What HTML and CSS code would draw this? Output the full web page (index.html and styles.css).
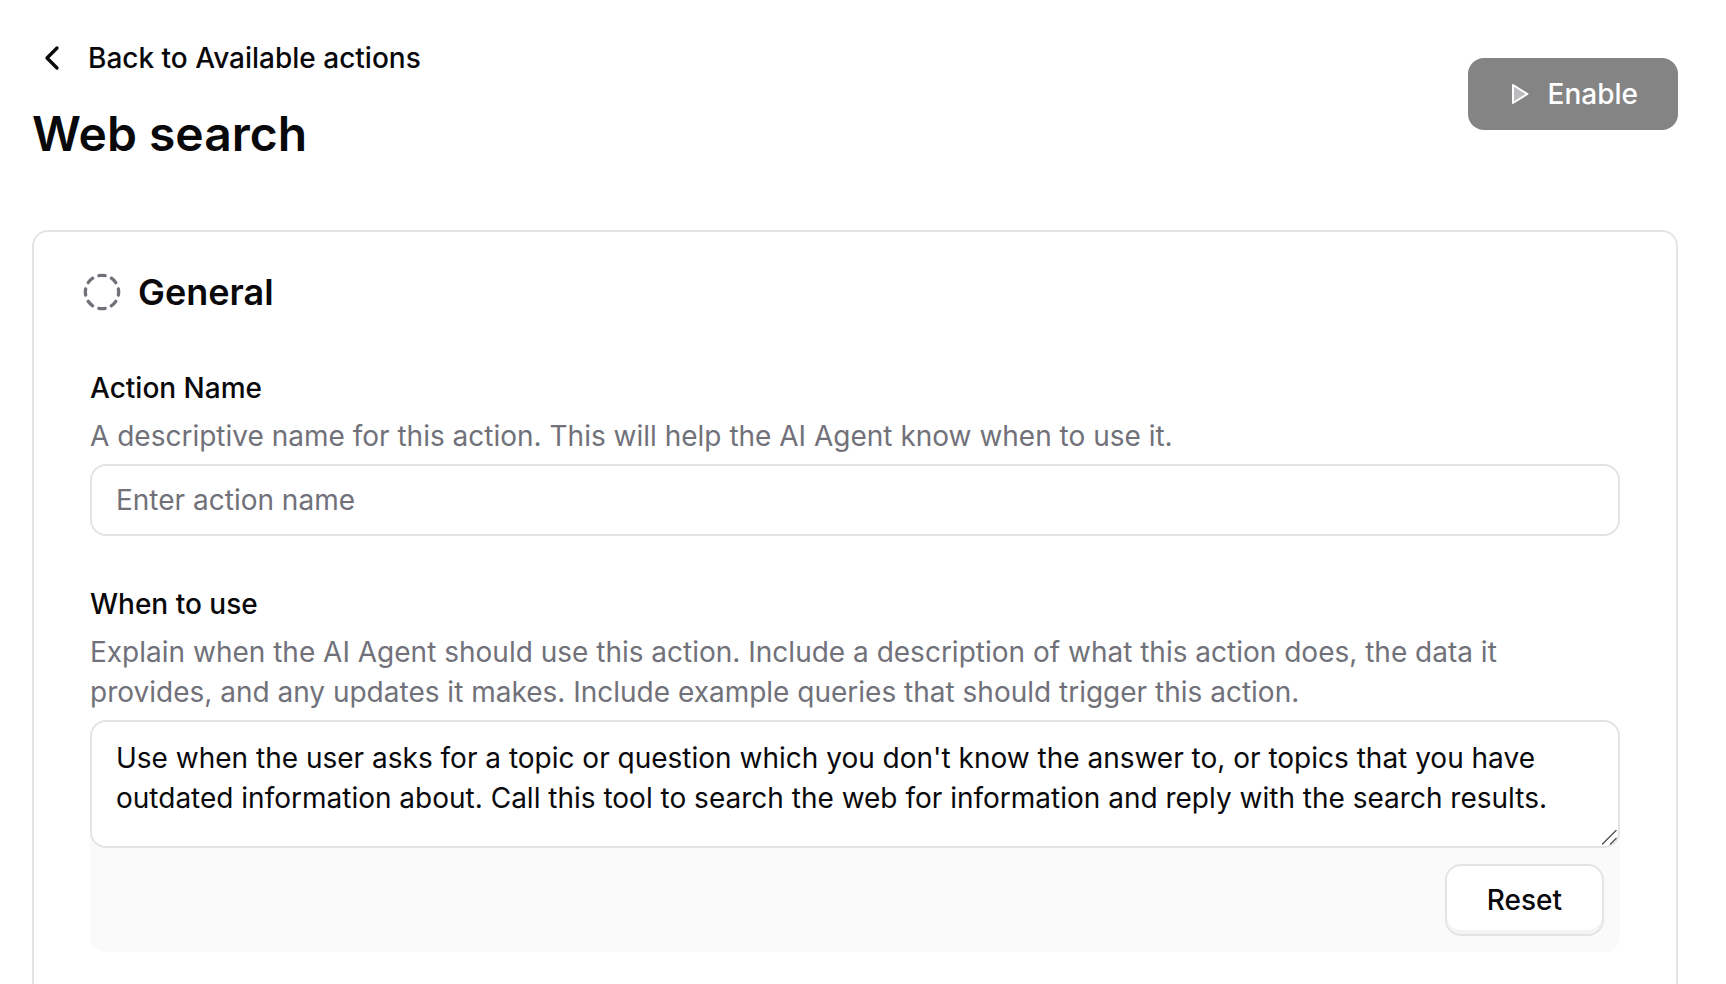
FILE: index.html
```html
<!DOCTYPE html>
<html lang="en">

<head>
  <meta charset="UTF-8">
  <meta name="viewport" content="width=device-width, initial-scale=1.0">
  <title>Web search</title>
  <link rel="stylesheet" href="styles.css">
</head>

<body>
  <header class="header">
    <div class="heading">
      <a class="back" href="#">
        <svg class="icon" viewBox="0 0 24 24" aria-hidden="true">
          <path d="m15 18-6-6 6-6" />
        </svg>
        Back to Available actions
      </a>
      <h1 class="title">Web search</h1>
    </div>
    <button class="button btn-enable" type="button">
      <svg class="icon-play" viewBox="0 0 24 24" aria-hidden="true">
        <path d="M5 3v18L19.5 12z" />
      </svg>
      Enable
    </button>
  </header>

  <main class="card">
    <h2 class="card-title">
      <svg class="icon muted" viewBox="0 0 24 24" aria-hidden="true">
        <path d="M10.1 2.182a10 10 0 0 1 3.8 0" />
        <path d="M13.9 21.818a10 10 0 0 1-3.8 0" />
        <path d="M17.609 3.721a10 10 0 0 1 2.69 2.7" />
        <path d="M2.182 13.9a10 10 0 0 1 0-3.8" />
        <path d="M20.279 17.609a10 10 0 0 1-2.7 2.69" />
        <path d="M21.818 10.1a10 10 0 0 1 0 3.8" />
        <path d="M3.721 6.391a10 10 0 0 1 2.7-2.69" />
        <path d="M6.391 20.279a10 10 0 0 1-2.69-2.7" />
      </svg>
      General
    </h2>
    <form class="form">
      <div class="field">
        <label for="name">Action Name</label>
        <p class="hint" id="name-hint">A descriptive name for this action. This will help the AI Agent know when to use it.</p>
        <input class="control" id="name" type="text" placeholder="Enter action name" aria-describedby="name-hint">
      </div>
      <div class="field">
        <label for="when">When to use</label>
        <p class="hint" id="when-hint">Explain when the AI Agent should use this action. Include a description of what this action does, the data it provides, and any updates it makes. Include example queries that should trigger this action.</p>
        <div class="editor">
          <div class="editor-text">
            <textarea class="control" id="when" rows="2" aria-describedby="when-hint">Use when the user asks for a topic or question which you don't know the answer to, or topics that you have outdated information about. Call this tool to search the web for information and reply with the search results.</textarea>
            <svg class="grip" viewBox="0 0 16 16" aria-hidden="true">
              <path d="M0 14.5 14.5 0M8 14.5 14.5 8" />
            </svg>
          </div>
          <div class="editor-footer">
            <button class="button btn-reset" type="reset">Reset</button>
          </div>
        </div>
      </div>
    </form>
  </main>
</body>

</html>
```
FILE: styles.css
```css
* {
  box-sizing: border-box;
}

body {
  display: flex;
  flex-direction: column;
  gap: 64px;
  min-height: 100vh;
  margin: 0;
  padding: 22px 48px 0 32px;
  background-color: #fff;
  color: #09090b;
  font-family: Inter, "Liberation Sans", sans-serif;
  font-size: 28px;
  line-height: 40px;
}

h1,
h2,
p {
  margin: 0;
}

.header {
  display: flex;
  justify-content: space-between;
  align-items: center;
}

.heading {
  display: flex;
  flex-direction: column;
  gap: 24px;
}

.back {
  display: flex;
  align-items: center;
  gap: 16px;
  padding-top: 16px;
  color: inherit;
  font-weight: 500;
  text-decoration: none;
}

.title {
  font-size: 48px;
  font-weight: 600;
  line-height: 64px;
}

.icon {
  flex: none;
  width: 40px;
  height: 40px;
  fill: none;
  stroke: currentColor;
  stroke-width: 2;
  stroke-linecap: round;
  stroke-linejoin: round;
}

.muted {
  color: #71717a;
}

.button {
  display: flex;
  align-items: center;
  gap: 16px;
  height: 72px;
  padding: 0 40px;
  border: none;
  border-radius: 16px;
  font: inherit;
  font-weight: 500;
  cursor: pointer;
}

.btn-enable {
  background-color: #848484;
  color: #fff;
}

.icon-play {
  width: 24px;
  height: 24px;
  fill: #bbbbc0;
  stroke: #fff;
  stroke-width: 2;
  stroke-linejoin: round;
}

.card {
  flex: 1;
  padding: 40px 56px 32px;
  border: 2px solid #e4e4e4;
  border-bottom: none;
  border-radius: 16px 16px 0 0;
}

.card-title {
  display: flex;
  align-items: center;
  gap: 16px;
  margin: 0 0 56px -8px;
  font-size: 36px;
  font-weight: 600;
}

.form {
  display: flex;
  flex-direction: column;
  gap: 48px;
}

.field {
  display: flex;
  flex-direction: column;
  gap: 8px;
}

.field label {
  font-weight: 500;
}

.hint {
  color: #71717a;
}

.control {
  display: block;
  width: 100%;
  height: 72px;
  padding: 14px 24px;
  border: 2px solid #e4e4e4;
  border-radius: 16px;
  outline: none;
  background-color: #fff;
  color: inherit;
  font: inherit;
}

.control::placeholder {
  color: #71717a;
}

textarea.control {
  height: 128px;
  padding: 16px 24px;
  resize: vertical;
}

textarea.control::-webkit-resizer {
  display: none;
}

.editor {
  border-radius: 16px;
  background-color: #fafafa;
}

.editor-text {
  position: relative;
}

.grip {
  position: absolute;
  right: 2px;
  bottom: 2px;
  width: 16px;
  height: 16px;
  fill: none;
  stroke: #555;
  stroke-width: 1.4;
  pointer-events: none;
}

.editor-footer {
  display: flex;
  justify-content: flex-end;
  padding: 16px;
}

.btn-reset {
  border: 2px solid #e4e4e4;
  background-color: #fff;
  color: inherit;
  box-shadow: inset 0 -4px 0 #f4f4f5;
}
```
